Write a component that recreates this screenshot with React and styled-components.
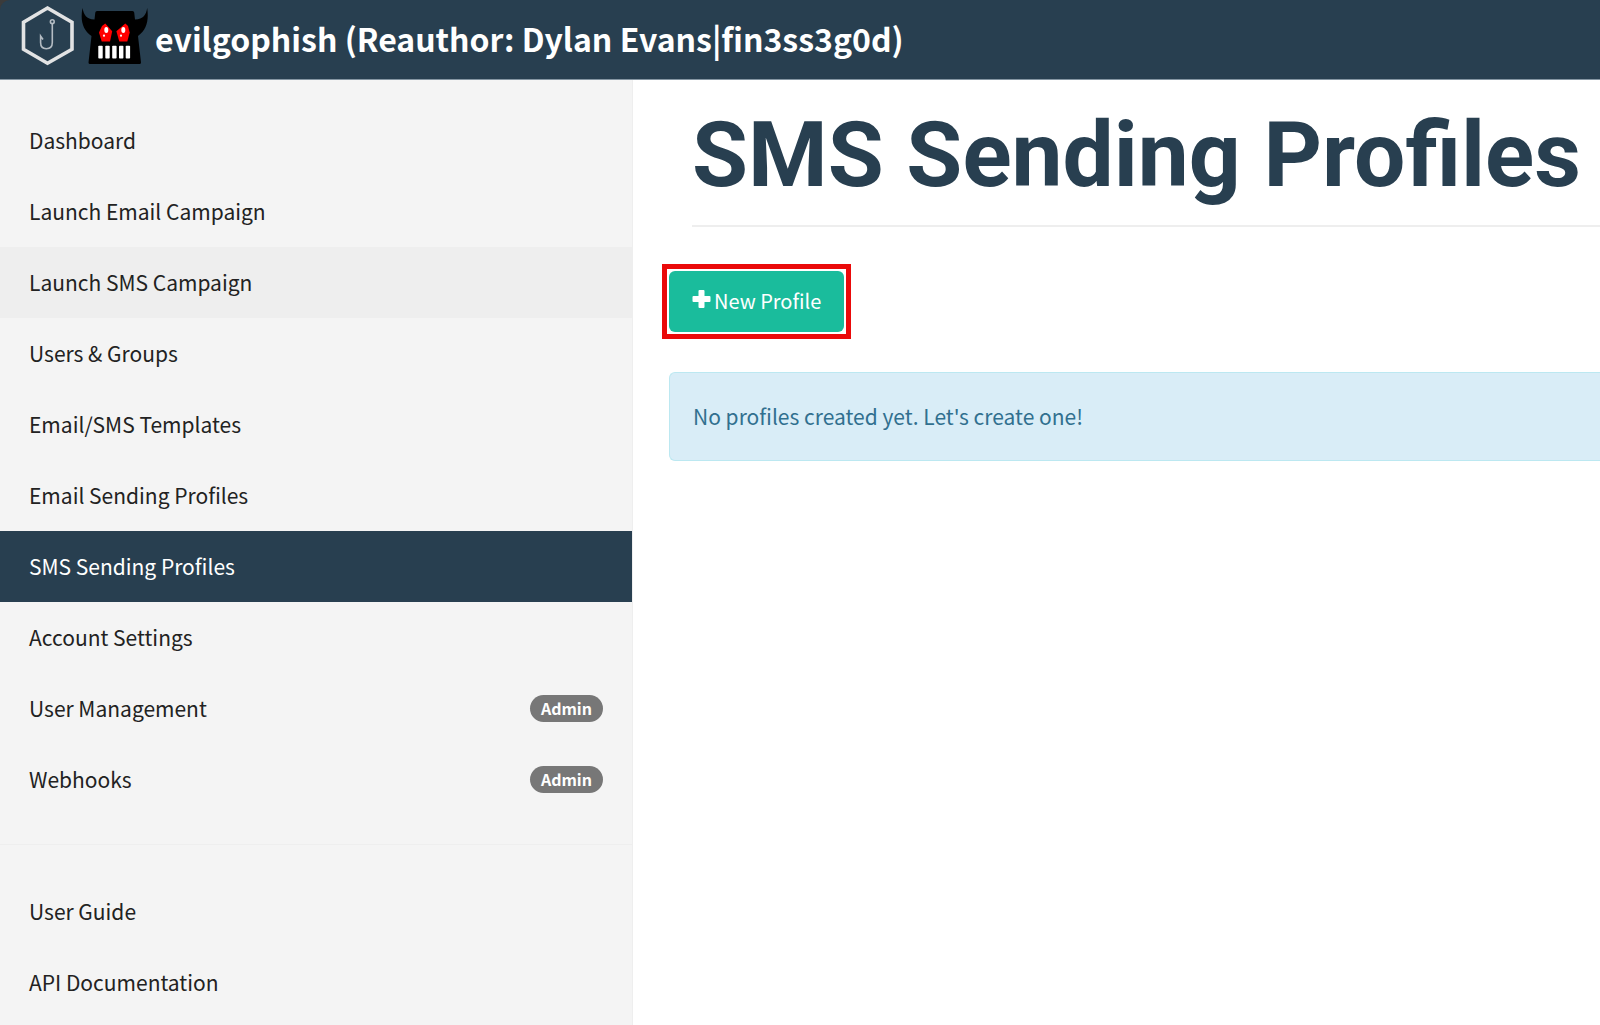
import styled, { createGlobalStyle } from "styled-components";

const GlobalStyle = createGlobalStyle`
  * {
    box-sizing: border-box;
  }
  body {
    margin: 0;
    background-color: #fff;
    color: #222;
    font-family: "Noto Sans CJK SC", "Open Sans", sans-serif;
    font-size: 21px;
    line-height: 31px;
  }
`;

const Page = styled.div`
  min-height: 100vh;
  display: flex;
  flex-direction: column;
`;

const HeaderWrap = styled.header`
  background-color: #3b3b3b;
`;

const Navbar = styled.div`
  height: 80px;
  display: flex;
  align-items: flex-start;
  padding: 0 20px;
  background-color: #283f50;
  border-bottom: 1px solid #8596a3;
  border-top-left-radius: 10px;
`;

const Brand = styled.a`
  display: flex;
  align-items: flex-start;
  gap: 7px;
  color: #fff;
  font-size: 32px;
  font-weight: 700;
  line-height: 77px;
  text-decoration: none;
  white-space: nowrap;
`;

const Logo = styled.svg`
  width: 128px;
  height: 72px;
  flex: none;
`;

const Body = styled.div`
  flex: 1;
  display: flex;
`;

const Sidebar = styled.nav`
  flex: 0 0 633px;
  padding-top: 25px;
  background-color: #f4f4f4;
  border-right: 1px solid #eee;
`;

const Menu = styled.ul`
  list-style: none;
  margin: 0;
  padding: 0;
`;

const MenuLink = styled.a`
  height: 71px;
  padding: 0 29px 1px;
  display: flex;
  align-items: center;
  justify-content: space-between;
  text-decoration: none;
  color: ${(props) => (props.$active ? "#fff" : "#222")};
  background-color: ${(props) =>
    props.$active ? "#283f50" : props.$hovered ? "#eee" : "transparent"};
`;

const Divider = styled.hr`
  margin: 29px 0 31px;
  border: 0;
  border-top: 1px solid #eee;
`;

const Badge = styled.span`
  padding: 0 11px;
  border-radius: 14px;
  background-color: #777;
  color: #fff;
  font-size: 16px;
  font-weight: 700;
  line-height: 27px;
`;

const Main = styled.main`
  flex: 1;
  min-width: 0;
  padding: 25px 0 0 36px;
`;

const Title = styled.h1`
  margin: 0 0 37px 23px;
  padding-bottom: 20px;
  border-bottom: 2px solid #eee;
  color: #283f50;
  font-family: Roboto, sans-serif;
  font-size: 91px;
  font-weight: 700;
  line-height: 100px;
  white-space: nowrap;
`;

const Highlight = styled.div`
  width: fit-content;
  margin: 0 0 33px -7px;
  padding: 2px;
  border: 5px solid #ea0a0a;
`;

const Button = styled.button`
  height: 61px;
  padding: 0 23px 3px;
  display: flex;
  align-items: center;
  gap: 3px;
  border: 0;
  border-radius: 6px;
  background-color: #1abc9c;
  color: #fff;
  font-family: inherit;
  font-size: 20px;
  line-height: 31px;
  cursor: pointer;
`;

const Alert = styled.div`
  padding: 28px 23px;
  border: 1px solid #bce8f1;
  border-right: 0;
  border-radius: 6px 0 0 6px;
  background-color: #d9edf7;
  color: #31708f;
`;

const menuItems = [
  { label: "Dashboard" },
  { label: "Launch Email Campaign" },
  { label: "Launch SMS Campaign", hovered: true },
  { label: "Users & Groups" },
  { label: "Email/SMS Templates" },
  { label: "Email Sending Profiles" },
  { label: "SMS Sending Profiles", active: true },
  { label: "Account Settings" },
  { label: "User Management", admin: true },
  { label: "Webhooks", admin: true },
];

const helpItems = [{ label: "User Guide" }, { label: "API Documentation" }];

const BrandLogo = () => (
  <Logo viewBox="20 0 128 72" aria-hidden="true">
    {/* fish hook in a hexagon */}
    <path
      d="M47.5 8 72 22.2V49.3L47.5 63.2 23.5 49.3V22.2Z"
      fill="none"
      stroke="#e2e3e4"
      strokeWidth="3.6"
    />
    <g fill="none" stroke="#b4bcc3" strokeWidth="1.6">
      <circle cx="52.3" cy="21.7" r="1.9" />
      <path d="M52.3 23.6V42.5C52.3 46.5 50 48.7 46.3 48.7S40.6 46.5 40.6 42.5V36L43 39.5" />
    </g>
    {/* horned monster */}
    <path
      d="M82.5 8C84 15 86 19 94.500 19.5L95.3 12.5Q95.5 11 97 11H132.5Q134 11 134.2 12.5L135 19.5C143.5 19 146 15 147.2 8C149 21 146.5 30 138 36L141 62.5Q141 64 139.5 64H90Q88.5 64 88.5 62.5L91.5 36C83 30 80 21 82.5 8Z"
      fill="#000"
    />
    <g fill="#f00">
      <path d="M105.3 23.6 112.2 31.3 110 41.6H101.7L99 32.5 102 26Z" />
      <path d="M125.3 23.6 116.4 31.3 119.3 41.6H127.3L129.7 32.5 128 26Z" />
    </g>
    <g fill="#fff">
      <ellipse cx="106.3" cy="30" rx="2" ry="3" />
      <ellipse cx="123.3" cy="30" rx="2" ry="3" />
      <circle cx="104" cy="35.7" r="1.1" />
      <circle cx="121" cy="35.7" r="1.1" />
      <rect x="98.3" y="45.7" width="4.4" height="12.8" rx="0.8" />
      <rect x="105.3" y="45.7" width="4.4" height="12.8" rx="0.8" />
      <rect x="112.2" y="45.7" width="4.4" height="12.8" rx="0.8" />
      <rect x="119" y="45.7" width="4.4" height="12.8" rx="0.8" />
      <rect x="125.7" y="45.7" width="4.4" height="12.8" rx="0.8" />
    </g>
  </Logo>
);

const PlusIcon = () => (
  <svg width="19" height="20" viewBox="0 0 19 20" aria-hidden="true">
    <path
      d="M7.5 0h4a1 1 0 0 1 1 1v5h5a1 1 0 0 1 1 1v4a1 1 0 0 1-1 1h-5v5a1 1 0 0 1-1 1h-4a1 1 0 0 1-1-1v-5h-5a1 1 0 0 1-1-1v-4a1 1 0 0 1 1-1h5v-5a1 1 0 0 1 1-1z"
      fill="#fff"
    />
  </svg>
);

const MenuList = ({ items }) => (
  <Menu>
    {items.map((item) => (
      <li key={item.label}>
        <MenuLink
          href="#"
          $active={item.active}
          $hovered={item.hovered}
          aria-current={item.active ? "page" : undefined}
        >
          {item.label}
          {item.admin && <Badge>Admin</Badge>}
        </MenuLink>
      </li>
    ))}
  </Menu>
);

const App = () => {
  return (
    <Page>
      <GlobalStyle />
      <HeaderWrap>
        <Navbar>
          <Brand href="#">
            <BrandLogo />
            evilgophish (Reauthor: Dylan Evans|fin3ss3g0d)
          </Brand>
        </Navbar>
      </HeaderWrap>
      <Body>
        <Sidebar>
          <MenuList items={menuItems} />
          <Divider />
          <MenuList items={helpItems} />
        </Sidebar>
        <Main>
          <Title>SMS Sending Profiles</Title>
          <Highlight>
            <Button type="button">
              <PlusIcon />
              New Profile
            </Button>
          </Highlight>
          <Alert role="status">No profiles created yet. Let's create one!</Alert>
        </Main>
      </Body>
    </Page>
  );
};

export default App;
